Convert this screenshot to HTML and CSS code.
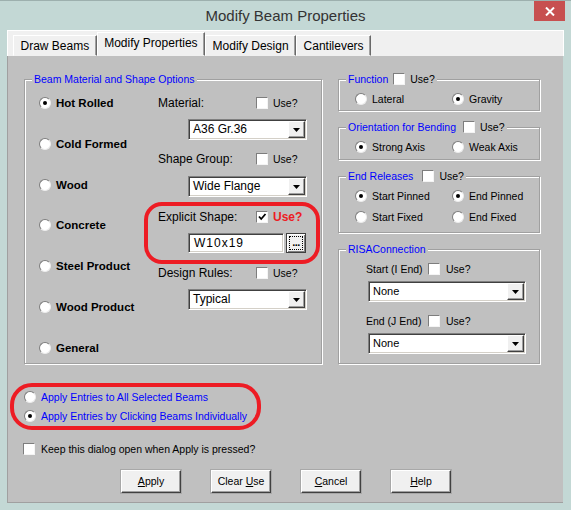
FILE: index.html
```html
<!DOCTYPE html>
<html>

<head>
  <meta charset="utf-8">
  <meta name="viewport" content="width=device-width,initial-scale=1">
  <link rel="stylesheet" href="styles.css">
</head>

<body>
  <!-- Window caption -->
  <div class="titlebar">
    <div class="title">Modify Beam Properties</div>
    <div class="close">
      <svg width="10" height="9" viewBox="0 0 10 9"><path d="M1 0.5 L9 8.5 M9 0.5 L1 8.5" stroke="#fff" stroke-width="2" fill="none"/></svg>
    </div>
  </div>

  <!-- Tabs -->
  <div class="tabstrip">
    <div class="tab">Draw Beams</div>
    <div class="tab active">Modify Properties</div>
    <div class="tab">Modify Design</div>
    <div class="tab">Cantilevers</div>
  </div>

  <div class="panel">
    <div class="top">

      <div class="group material">
        <div class="legend">Beam Material and Shape Options</div>
        <div class="mat-body">
          <div class="types">
            <div class="opt bold"><span class="radio on"></span>Hot Rolled</div>
            <div class="opt bold"><span class="radio"></span>Cold Formed</div>
            <div class="opt bold"><span class="radio"></span>Wood</div>
            <div class="opt bold"><span class="radio"></span>Concrete</div>
            <div class="opt bold"><span class="radio"></span>Steel Product</div>
            <div class="opt bold"><span class="radio"></span>Wood Product</div>
            <div class="opt bold"><span class="radio"></span>General</div>
          </div>

          <div class="fields">
            <div class="field-row"><span class="lbl">Material:</span><span class="check"></span><span class="use">Use?</span></div>
            <div class="select"><span class="val">A36 Gr.36</span><span class="arrow"><svg width="7" height="4"><polygon points="0,0 7,0 3.5,4" fill="#000"/></svg></span></div>

            <div class="field-row gap11"><span class="lbl">Shape Group:</span><span class="check"></span><span class="use">Use?</span></div>
            <div class="select mt9"><span class="val">Wide Flange</span><span class="arrow"><svg width="7" height="4"><polygon points="0,0 7,0 3.5,4" fill="#000"/></svg></span></div>

            <div class="explicit">
              <div class="field-row"><span class="lbl">Explicit Shape:</span><span class="check on"><svg width="10" height="10"><path d="M2 4.5 L4.2 7 L8.5 2" stroke="#000" stroke-width="1.8" fill="none"/></svg></span><span class="use red">Use?</span></div>
              <div class="shape-row">
                <div class="input">W10x19</div>
                <div class="dots"><span>...</span></div>
              </div>
            </div>

            <div class="field-row gap12"><span class="lbl">Design Rules:</span><span class="check"></span><span class="use">Use?</span></div>
            <div class="select"><span class="val">Typical</span><span class="arrow"><svg width="7" height="4"><polygon points="0,0 7,0 3.5,4" fill="#000"/></svg></span></div>
          </div>
        </div>
      </div>

      <div class="side">
        <div class="group function">
          <div class="legend">Function<span class="check"></span><span class="black">Use?</span></div>
          <div class="opts">
            <div class="opt"><span class="radio"></span>Lateral</div>
            <div class="opt"><span class="radio on"></span>Gravity</div>
          </div>
        </div>

        <div class="group orient">
          <div class="legend">Orientation for Bending<span class="check"></span><span class="black">Use?</span></div>
          <div class="opts">
            <div class="opt"><span class="radio on"></span>Strong Axis</div>
            <div class="opt"><span class="radio"></span>Weak Axis</div>
          </div>
        </div>

        <div class="group releases">
          <div class="legend">End Releases<span class="check"></span><span class="black">Use?</span></div>
          <div class="opts">
            <div class="opt"><span class="radio on"></span>Start Pinned</div>
            <div class="opt"><span class="radio on"></span>End Pinned</div>
            <div class="opt"><span class="radio"></span>Start Fixed</div>
            <div class="opt"><span class="radio"></span>End Fixed</div>
          </div>
        </div>

        <div class="group risa">
          <div class="legend">RISAConnection</div>
          <div class="risa-body">
            <div class="field-row"><span class="lbl">Start (I End)</span><span class="check"></span><span class="use">Use?</span></div>
            <div class="select wide"><span class="val">None</span><span class="arrow"><svg width="7" height="4"><polygon points="0,0 7,0 3.5,4" fill="#000"/></svg></span></div>
            <div class="field-row gap11"><span class="lbl">End (J End)</span><span class="check"></span><span class="use">Use?</span></div>
            <div class="select wide"><span class="val">None</span><span class="arrow"><svg width="7" height="4"><polygon points="0,0 7,0 3.5,4" fill="#000"/></svg></span></div>
          </div>
        </div>
      </div>
    </div>

    <!-- How entries are applied -->
    <div class="apply-mode">
      <div class="opt blue"><span class="radio"></span>Apply Entries to All Selected Beams</div>
      <div class="opt blue"><span class="radio on"></span>Apply Entries by Clicking Beams Individually</div>
    </div>

    <div class="keep"><span class="check"></span>Keep this dialog open when Apply is pressed?</div>

    <div class="buttons">
      <div class="btn"><u>A</u>pply</div>
      <div class="btn">Clear <u>U</u>se</div>
      <div class="btn"><u>C</u>ancel</div>
      <div class="btn"><u>H</u>elp</div>
    </div>
  </div>
</body>

</html>
```

FILE: styles.css
```css
* {
  box-sizing: border-box;
}

body {
  margin: 0;
  width: 571px;
  height: 510px;
  overflow: hidden;
  background-color: #c3d8d5;
  border-top: 1px solid #9db0ae;
  font-family: "Liberation Sans", Arial, sans-serif;
  color: #000;
}

/* Window caption */

.titlebar {
  display: grid;
  grid-template-columns: 1fr auto 1fr;
  height: 29px;
}

.title {
  grid-column: 2;
  font-size: 15px;
  line-height: 29px;
  color: #333;
}

.close {
  grid-column: 3;
  justify-self: end;
  width: 31px;
  height: 20px;
  margin-right: 6px;
  background-color: #c75050;
  display: flex;
  align-items: center;
  justify-content: center;
}

/* Tabs */

.tabstrip {
  display: flex;
  align-items: flex-end;
  height: 26px;
  margin: 0 7px;
  padding-left: 5px;
  background-color: #f0f0f0;
  border: 1px solid #fff;
  border-bottom: none;
}

.tab {
  height: 21px;
  padding: 0 6.5px;
  font-size: 12px;
  line-height: 20px;
  background-color: #f0f0f0;
  border: 1px solid;
  border-color: #fff #696969 transparent #fff;
  box-shadow: inset -1px 0 #a0a0a0;
}

.tab.active {
  height: 24px;
  line-height: 20px;
}

/* Gray dialog body */

.panel {
  height: 447px;
  margin: 0 8px 0 7px;
  padding: 23px 0 0 16px;
  background-color: #c0c0c0;
  border-left: 1px solid #a0a0a0;
  border-bottom: 1px solid #a0a0a0;
}

.top {
  display: flex;
  gap: 16px;
}

.group {
  border: 1px solid #a0a0a0;
  box-shadow: inset 1px 1px #fff, 1px 1px #fff;
}

.legend {
  display: flex;
  align-items: center;
  width: fit-content;
  height: 14px;
  margin: -8px 0 0 7px;
  padding: 0 2px;
  background-color: #c0c0c0;
  font-size: 10.5px;
  color: #00f;
}

.legend .check {
  margin-left: 5px;
  margin-right: 5px;
}

.orient .legend .check {
  margin-left: 7px;
}

.releases .legend .check {
  margin-left: 9px;
}

.black {
  color: #000;
}

/* Controls */

.radio {
  flex: none;
  width: 12px;
  height: 12px;
  margin-right: 5px;
  border-radius: 50%;
  background-color: #fff;
  border: 1px solid;
  border-color: #7d7d7d #ececec #ececec #7d7d7d;
  display: flex;
  align-items: center;
  justify-content: center;
}

.radio.on::after {
  content: "";
  width: 4px;
  height: 4px;
  border-radius: 50%;
  background-color: #000;
}

.check {
  flex: none;
  width: 12px;
  height: 12px;
  background-color: #fff;
  border: 1px solid;
  border-color: #7d7d7d #f4f4f4 #f4f4f4 #7d7d7d;
  display: flex;
  align-items: center;
  justify-content: center;
}

.opt {
  display: flex;
  align-items: center;
  height: 16px;
  font-size: 10.5px;
  white-space: nowrap;
}

.opt.bold {
  font-size: 11.5px;
  font-weight: bold;
}

.opt.blue {
  color: #00f;
}

.select {
  display: flex;
  width: 119px;
  height: 21px;
  margin: 8px 0 0 30px;
  padding: 1px;
  background-color: #fff;
  border: 1px solid;
  border-color: #808080 #fff #fff #808080;
  box-shadow: inset 1px 1px #404040, inset -1px -1px #d4d0c8;
}

.select .val {
  flex: 1;
  padding-left: 3px;
  font-size: 12px;
  line-height: 17px;
}

.arrow {
  width: 17px;
  background-color: #f0f0f0;
  border: 1px solid;
  border-color: #fff #404040 #404040 #fff;
  box-shadow: inset -1px -1px #a0a0a0;
  display: flex;
  align-items: center;
  justify-content: center;
}

.select.mt9 {
  margin-top: 9px;
}

/* Material & shape group */

.material {
  width: 298px;
  height: 285px;
}

.mat-body {
  display: flex;
  padding-left: 14px;
}

.types {
  display: flex;
  flex-direction: column;
  gap: 24.83px;
  width: 119px;
  margin-top: 9px;
}

.fields {
  width: 149px;
  margin-top: 9px;
}

.field-row {
  display: flex;
  align-items: center;
  height: 16px;
}

.field-row .lbl {
  width: 98px;
  font-size: 12px;
}

.field-row .use {
  margin-left: 5px;
  font-size: 10.5px;
}

.field-row .use.red {
  color: #ed1c24;
  font-size: 12px;
  font-weight: bold;
}

.field-row.gap11 {
  margin-top: 11px;
}

.field-row.gap12 {
  margin-top: 12px;
}

/* Red marker round the explicit shape */

.explicit {
  position: relative;
  margin-top: 12px;
}

.explicit::after {
  content: "";
  position: absolute;
  top: -7px;
  bottom: -11px;
  left: -14px;
  right: -13px;
  border: 4px solid #ed1c24;
  border-radius: 18px;
}

.shape-row {
  display: flex;
  gap: 2px;
  margin: 8px 0 0 30px;
}

.input {
  width: 96px;
  height: 20px;
  padding-left: 5px;
  background-color: #fff;
  border: 1px solid;
  border-color: #808080 #fff #fff #808080;
  box-shadow: inset 1px 1px #404040, inset -1px -1px #d4d0c8;
  font-size: 12px;
  letter-spacing: 1px;
  line-height: 18px;
}

.dots {
  width: 20px;
  height: 20px;
  padding: 2px;
  background-color: #f0f0f0;
  border: 1px solid #404040;
  box-shadow: inset 1px 1px #fff, inset -1px -1px #808080;
}

.dots span {
  display: block;
  height: 100%;
  border: 1px dotted #000;
  font-size: 11px;
  font-weight: bold;
  line-height: 10px;
  text-align: center;
  letter-spacing: -0.5px;
}

/* Right hand column */

.side {
  display: flex;
  flex-direction: column;
  gap: 16px;
  width: 202px;
}

.function {
  height: 32px;
}

.orient {
  height: 33px;
}

.releases {
  height: 57px;
}

.risa {
  height: 115px;
}

.opts {
  display: grid;
  grid-template-columns: 97px 97px;
  row-gap: 5px;
  padding: 5px 0 0 16px;
}

.risa-body {
  padding: 5px 0 0 27px;
}

.risa .field-row .lbl {
  width: 62px;
  font-size: 10.5px;
}

.risa .field-row .use {
  margin-left: 6px;
}

.select.wide {
  width: 158px;
  margin: 4px 0 0 2px;
}

.select.wide .val {
  font-size: 11px;
}

/* Bottom part */

.apply-mode {
  position: relative;
  display: flex;
  flex-direction: column;
  gap: 3px;
  width: fit-content;
  margin-top: 25px;
}

.apply-mode::after {
  content: "";
  position: absolute;
  top: -6px;
  bottom: -6px;
  left: -14px;
  right: -14px;
  border: 4px solid #ed1c24;
  border-radius: 22px;
}

.keep {
  display: flex;
  align-items: center;
  gap: 6px;
  height: 16px;
  margin: 17px 0 0 -1px;
  font-size: 10.5px;
}

.buttons {
  display: flex;
  gap: 30px;
  margin: 13px 0 0 97px;
}

.btn {
  width: 60px;
  height: 23px;
  background-color: #f0f0f0;
  border: 1px solid;
  border-color: #fff #404040 #404040 #fff;
  box-shadow: inset -1px -1px #a0a0a0, 0 0 0 1px #a8a8a8;
  font-size: 10.5px;
  line-height: 21px;
  text-align: center;
}
```
